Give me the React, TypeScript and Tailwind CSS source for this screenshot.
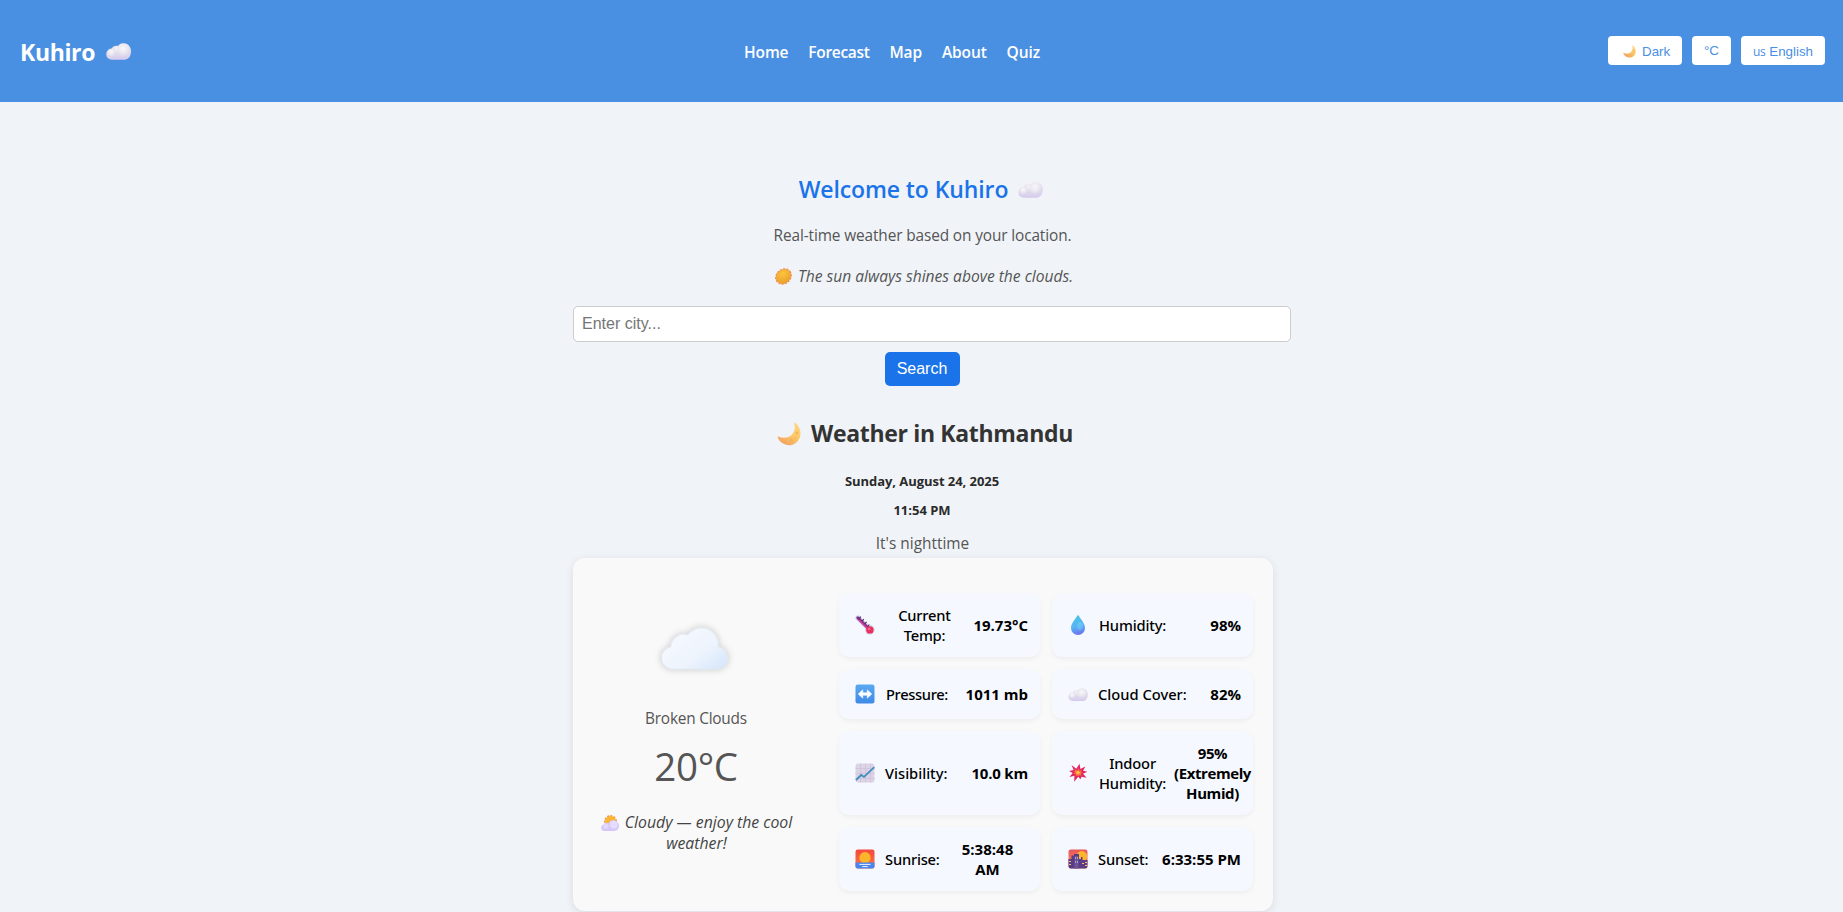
import React, { type ReactNode } from "react";

type IconProps = { className?: string };

function Cloud({ className }: IconProps) {
  return (
    <svg viewBox="0 0 26 17" className={className}>
      <defs>
        <linearGradient id="cloudBase" x1="0" y1="0" x2="0" y2="1">
          <stop offset="0" stopColor="#f3f1f6" />
          <stop offset="0.6" stopColor="#e4dff0" />
          <stop offset="1" stopColor="#d3c9ee" />
        </linearGradient>
        <radialGradient id="cloudPuff" cx="0.45" cy="0.35" r="0.65">
          <stop offset="0" stopColor="#fbfafc" />
          <stop offset="0.6" stopColor="#e8e5ee" />
          <stop offset="1" stopColor="#d6cee9" />
        </radialGradient>
      </defs>
      <path d="M6 17a5.6 5.6 0 0 1-.3-11.2C7 3 10 1.800 12.500 2.700 14 .8 16 0 18.200 0 22.500 0 26 3.500 26 8.500S23 17 19.500 17z" fill="url(#cloudBase)" />
      <circle cx="12" cy="7.300" r="4.500" fill="url(#cloudPuff)" opacity="0.8" />
      <circle cx="5.800" cy="10" r="4.600" fill="url(#cloudPuff)" opacity="0.9" />
      <circle cx="18.300" cy="7.600" r="7" fill="url(#cloudPuff)" opacity="0.9" />
    </svg>
  );
}

function Moon({ className }: IconProps) {
  return (
    <svg viewBox="0 0 24 24" className={className}>
      <defs>
        <linearGradient id="moonFill" x1="0.9" y1="0" x2="0.3" y2="1">
          <stop offset="0" stopColor="#fbd98c" />
          <stop offset="0.55" stopColor="#fdc665" />
          <stop offset="1" stopColor="#f0a262" />
        </linearGradient>
      </defs>
      <path d="M18.300.8C22.500 4 24.500 9.500 23 15c-2 6.500-8.500 9.500-14 7.800C5 21.700 1.800 18.900.7 15.600c-.3-1 .5-1.300 1.300-.9 5 2 10.500 1 13.500-2.800 2.400-3 2.700-6.700 1.800-10.200-.2-.9.300-1.400 1-.9z" fill="url(#moonFill)" />
      <circle cx="20" cy="11" r="1.400" fill="#e9a650" opacity="0.6" />
      <circle cx="14.500" cy="18" r="1.600" fill="#e9a650" opacity="0.5" />
      <circle cx="8.500" cy="19.500" r="1.100" fill="#e9a650" opacity="0.5" />
      <circle cx="18.500" cy="16" r="1" fill="#e9a650" opacity="0.5" />
    </svg>
  );
}

function Sun({ className }: IconProps) {
  return (
    <svg viewBox="0 0 18 18" className={className}>
      <defs>
        <radialGradient id="sunFill" cx="0.6" cy="0.3" r="0.7">
          <stop offset="0" stopColor="#fcc53d" />
          <stop offset="1" stopColor="#eaa02c" />
        </radialGradient>
      </defs>
      <g transform="rotate(-40 9 9)">
        <ellipse cx="9" cy="9" rx="8.600" ry="7.300" fill="none" stroke="#f08a45" strokeWidth="1.600" strokeDasharray="2.200 1.300" />
        <ellipse cx="9" cy="9" rx="8.300" ry="7.100" fill="url(#sunFill)" stroke="#ee9340" strokeWidth="0.500" />
      </g>
    </svg>
  );
}

function SunBehindCloud({ className }: IconProps) {
  return (
    <svg viewBox="0 0 18 16" className={className}>
      <circle cx="9.500" cy="6.500" r="5.600" fill="none" stroke="#f08a35" strokeWidth="1.600" strokeDasharray="2 1.200" />
      <circle cx="9.500" cy="6.500" r="5.400" fill="#fbb62f" />
      <path d="M3.300 16a3.300 3.300 0 0 1-.6-6.500c.8-1.900 3.300-2.400 4.800-1.200C8.800 5.800 10.700 4.800 13 5.200c3 .5 5 2.700 5 5.600 0 3-2 5.200-4.800 5.200z" fill="#d6c6fa" />
      <circle cx="12.800" cy="9.600" r="3.900" fill="#e6dcfd" />
      <circle cx="5" cy="11.300" r="2.600" fill="#e2d7fc" />
    </svg>
  );
}

function Thermometer({ className }: IconProps) {
  return (
    <svg viewBox="0 0 20 20" className={className}>
      <path d="M3 3l11.500 11.500" stroke="#cfd6ee" strokeWidth="5.200" strokeLinecap="round" />
      <circle cx="14.800" cy="14.800" r="4.800" fill="#cdd3ec" />
      <path d="M2.800 2.800l11 11" stroke="#8d2f86" strokeWidth="3" strokeLinecap="round" />
      <path d="M4.500 5.500l9 9" stroke="#d63a9c" strokeWidth="1.400" strokeLinecap="round" />
      <path d="M5.800 1.600L4 3.800M8.800 4.200L7 6.300M11.600 6.800L9.800 8.900M14.300 9.500l-1.600 2" stroke="#533064" strokeWidth="1.200" />
      <circle cx="14.900" cy="14.900" r="3.700" fill="#ee2f5c" />
      <circle cx="14.200" cy="14" r="1.300" fill="#f7698a" />
    </svg>
  );
}

function Droplet({ className }: IconProps) {
  return (
    <svg viewBox="0 0 20 20" className={className}>
      <defs>
        <linearGradient id="dropFill" x1="0.3" y1="0" x2="0.5" y2="1">
          <stop offset="0" stopColor="#4ec3e4" />
          <stop offset="0.55" stopColor="#55b6f4" />
          <stop offset="1" stopColor="#6d72f2" />
        </linearGradient>
      </defs>
      <path d="M9.400.5c.3-.5.9-.5 1.200 0C13 4.300 17 8.800 17 13a7 7 0 0 1-14 0C3 8.800 7 4.300 9.400.5z" fill="url(#dropFill)" />
      <ellipse cx="12" cy="11" rx="2.800" ry="4" fill="#7bd2fb" opacity="0.45" />
    </svg>
  );
}

function Arrows({ className }: IconProps) {
  return (
    <svg viewBox="0 0 20 20" className={className}>
      <defs>
        <linearGradient id="arrowTile" x1="0" y1="0" x2="0" y2="1">
          <stop offset="0" stopColor="#5aa9f2" />
          <stop offset="1" stopColor="#3f8ae6" />
        </linearGradient>
      </defs>
      <rect x="0.500" y="0.500" width="19" height="19" rx="2.200" fill="url(#arrowTile)" />
      <path d="M3.200 10l4.600-4.200v2.900h4.400V5.800l4.600 4.200-4.600 4.200v-2.900H7.800v2.900z" fill="#fff" stroke="#fff" strokeWidth="0.500" strokeLinejoin="round" />
    </svg>
  );
}

function Chart({ className }: IconProps) {
  return (
    <svg viewBox="0 0 20 20" className={className}>
      <rect x="0.500" y="0.500" width="19" height="19" rx="2.500" fill="#dcd3e6" />
      <path d="M5.500.5v19M10.500.5v19M15.500.5v19M.5 5.500h19M.5 10.500h19M.5 15.500h19" stroke="#cfc4da" strokeWidth="0.900" />
      <path d="M1 17l5.200-5 2.800 1.900L19.300 4.200" fill="none" stroke="#3f8fc0" strokeWidth="1.800" />
    </svg>
  );
}

function Burst({ className }: IconProps) {
  return (
    <svg viewBox="0 0 20 20" className={className}>
      <path d="M3.500 2l4.800 3.700L11.500.8l.9 5.200 5-2.500-2.300 4.200 4.200 1-4.200 2 3.400 4-5-1-1 2.600-2.300-2.600-4 5 .2-6L1.500 14l3.200-4L1 8l4.600-1z" fill="#e3245f" />
      <path d="M6.500 6l2.700 1.600 1.500-2.700.6 2.900 2.700-1.100-1.300 2.400 2.200.7-2.200 1 1.100 2-2.600-.6-1 1.500-1.100-1.600-1.600 1.700.3-2.700-2.300-.1 1.700-1.600-2.200-.9 2.100-.3z" fill="#f8743c" />
      <circle cx="10" cy="9.600" r="1.700" fill="#ffc54a" />
    </svg>
  );
}

function Sunrise({ className }: IconProps) {
  return (
    <svg viewBox="0 0 20 20" className={className}>
      <defs>
        <linearGradient id="riseSky" x1="0" y1="0" x2="0" y2="1">
          <stop offset="0" stopColor="#f4483f" />
          <stop offset="1" stopColor="#fb7a3d" />
        </linearGradient>
      </defs>
      <rect x="0.500" y="0.500" width="19" height="19" rx="2.200" fill="url(#riseSky)" />
      <circle cx="10" cy="8.700" r="5.600" fill="#fdb52c" />
      <path d="M.5 13.500h19v3.800a2.200 2.200 0 0 1-2.200 2.200H2.700a2.200 2.200 0 0 1-2.200-2.200z" fill="#4a86ee" />
      <path d="M4.800 15.400h10.400M7.600 17.600h4.800" stroke="#fff" strokeWidth="0.900" strokeLinecap="round" />
    </svg>
  );
}

function Sunset({ className }: IconProps) {
  return (
    <svg viewBox="0 0 20 20" className={className}>
      <defs>
        <linearGradient id="duskSky" x1="0" y1="0" x2="0" y2="1">
          <stop offset="0" stopColor="#e8565c" />
          <stop offset="1" stopColor="#f99a55" />
        </linearGradient>
      </defs>
      <rect x="0.500" y="0.500" width="19" height="19" rx="2.200" fill="url(#duskSky)" />
      <circle cx="13.800" cy="7.200" r="5.200" fill="#fcb52e" />
      <path d="M.5 10h3V6.500h2.500V5h5v5h2V8h1.500v3h5v6.300a2.200 2.200 0 0 1-2.200 2.200H2.700a2.200 2.200 0 0 1-2.200-2.200z" fill="#5a3b85" />
      <path d="M6.500 7h4v12.500h-4z" fill="#6f5597" />
      <path d="M7.500 8v2M9.500 8v2M7.500 12v2M9.500 12v2" stroke="#b9a6d2" strokeWidth="0.900" />
      <path d="M14 14.500h2M17 13.500h2M17 16.500h2.500M1 12.500h2M1 15.500h2" stroke="#f2c07a" strokeWidth="1.200" />
    </svg>
  );
}

function BigCloud() {
  return (
    <svg viewBox="0 0 90 66" className="h-[66px] w-[90px] shrink-0 overflow-visible">
      <defs>
        <linearGradient id="bigCloud" x1="0.300" y1="0.300" x2="1" y2="0.900">
          <stop offset="0" stopColor="#f3f7fe" />
          <stop offset="0.450" stopColor="#eef4fd" />
          <stop offset="1" stopColor="#d6e6fb" />
        </linearGradient>
      </defs>
      <path
        d="M22.500 54.500a11.600 11.600 0 0 1-2-23A13 13 0 0 1 37.500 19.500 17.200 17.200 0 0 1 68.500 31.500 11.600 11.600 0 0 1 67.500 54.500z"
        fill="url(#bigCloud)"
        stroke="#e3e7ec"
        strokeWidth="1.600"
        className="drop-shadow-[0_0_3px_rgba(0,0,0,0.17)]"
      />
    </svg>
  );
}

function Item({ icon, label, value }: { icon: ReactNode; label: ReactNode; value: ReactNode }) {
  return (
    <div className="flex items-center rounded-[10px] bg-[#f5f9ff] pr-3 pl-4 text-center leading-5 whitespace-nowrap text-black shadow-[0_2px_5px_rgba(0,0,0,0.05)]">
      <span className="mr-[11px] flex size-5 shrink-0 items-center justify-center">{icon}</span>
      <span className="font-['Noto_Sans',sans-serif] text-[14.7px] font-medium">{label}</span>
      <span className="ml-auto text-[15px] font-bold">{value}</span>
    </div>
  );
}

export default function App() {
  return (
    <div className="h-screen overflow-hidden bg-[#f0f4f8] font-['Open_Sans','Noto_Sans',sans-serif]">
      <header className="flex h-[102px] items-center justify-between bg-[#4a90e2] pr-[18px] pl-5 text-white">
        <div className="flex w-[156px] items-center pt-px">
          <span className="text-[23px] leading-8 font-bold tracking-[-0.35px]">Kuhiro</span>
          <Cloud className="ml-[11px] h-[17px] w-[25px]" />
        </div>
        <nav className="flex w-[296px] justify-between pt-px text-[15.5px] leading-6 font-semibold tracking-[-0.1px]">
          <a>Home</a>
          <a className="tracking-[-0.3px]">Forecast</a>
          <a>Map</a>
          <a>About</a>
          <a>Quiz</a>
        </nav>
        <div className="flex gap-2.5 pb-px font-['Liberation_Sans',Arial,sans-serif] text-[13.333px] text-[#4a90e2]">
          <button className="flex h-[29px] w-[74px] items-center rounded bg-white pt-0.5 pl-[15px]">
            <Moon className="mr-1.5 size-[13px]" />
            Dark
          </button>
          <button className="h-[29px] w-[39px] rounded bg-white">°C</button>
          <button className="flex h-[29px] w-[84px] items-center rounded bg-white pt-0.5 pl-3">
            <span className="mr-1 font-['Open_Sans',sans-serif] text-[12px] leading-4 tracking-[-0.4px]">us</span>
            English
          </button>
        </div>
      </header>

      <div className="pl-[3px]">
        <main className="mx-auto flex w-[700px] flex-col items-center pt-[71px] text-center text-[#555]">
          <h1 className="flex h-8 items-center pr-1 text-[23px] leading-8 font-semibold tracking-[-0.1px] text-[#1a73e8]">
            Welcome to Kuhiro
            <Cloud className="ml-2.5 h-[17px] w-[25px]" />
          </h1>
          <p className="mt-[19px] pr-px text-[15.4px] leading-6 tracking-[-0.12px]">Real-time weather based on your location.</p>
          <p className="mt-4 flex items-center pl-0.5 text-[15.6px] leading-6 italic">
            <Sun className="mr-1.5 size-[17px]" />
            The sun always shines above the clouds.
          </p>
          <input
            placeholder="Enter city..."
            className="mt-[18px] h-9 w-[718px] shrink-0 self-start rounded-[5px] border border-[#ccc] bg-white px-2 font-['Liberation_Sans',Arial,sans-serif] text-base placeholder:text-[#757575]"
          />
          <button className="mt-2.5 mr-0.5 h-[34px] w-[75px] rounded-[5px] bg-[#1a73e8] font-['Liberation_Sans',Arial,sans-serif] text-base text-white">
            Search
          </button>
          <h2 className="mt-[31px] flex items-center pl-1 text-[23px] leading-8 font-bold tracking-[-0.33px] text-[#333]">
            <Moon className="mt-0.5 mr-2.5 size-6" />
            Weather in Kathmandu
          </h2>
          <p className="mt-[23px] pr-0.5 text-[13px] leading-[18px] font-bold tracking-[-0.05px] text-[#2a2a2a]">Sunday, August 24, 2025</p>
          <p className="mt-[11px] pr-0.5 text-[13px] leading-[18px] font-bold text-[#2a2a2a]">11:54 PM</p>
          <p className="mt-[13px] pr-px text-[15.4px] leading-6">It's nighttime</p>

          <section className="mt-0.5 flex h-[353px] w-[700px] rounded-xl bg-[#f9f9f9] pt-[35px] pr-5 pb-5 pl-5 shadow-[0_2px_8px_rgba(0,0,0,0.1)]">
            <div className="flex w-[206px] flex-col items-center pt-[22px]">
              <div className="pr-[3px]">
                <BigCloud />
              </div>
              <p className="mt-[26px] text-[15.4px] leading-6 tracking-[-0.22px]">Broken Clouds</p>
              <p className="mt-[9px] text-[38.5px] leading-[52px] tracking-[-0.3px]">20°C</p>
              <p className="mt-5 pl-px text-[15.8px] leading-[21px] text-[#444] italic">
                <span className="flex items-center whitespace-nowrap">
                  <SunBehindCloud className="mr-1.5 h-4 w-[18px]" />
                  Cloudy — enjoy the cool
                </span>
                weather!
              </p>
            </div>
            <div className="ml-10 grid w-[414px] grid-cols-2 grid-rows-[64px_50px_84px_64px] gap-3">
              <Item
                icon={<Thermometer className="size-5" />}
                label={<span className="block w-[77px] tracking-[-0.2px]">Current<br />Temp:</span>}
                value="19.73°C"
              />
              <Item icon={<Droplet className="size-5" />} label={<span className="tracking-[-0.15px]">Humidity:</span>} value="98%" />
              <Item icon={<Arrows className="size-5" />} label={<span className="tracking-[-0.35px]">Pressure:</span>} value="1011 mb" />
              <Item icon={<Cloud className="h-[13px] w-5" />} label={<span className="-ml-px">Cloud Cover:</span>} value="82%" />
              <Item icon={<Chart className="size-5" />} label={<span className="-ml-px">Visibility:</span>} value={<span className="tracking-[-0.2px]">10.0 km</span>} />
              <Item
                icon={<Burst className="size-5" />}
                label={<span className="block tracking-[-0.15px]">Indoor<br />Humidity:</span>}
                value={<span className="-mr-2.5 block tracking-[-0.4px]">95%<br />(Extremely<br />Humid)</span>}
              />
              <Item
                icon={<Sunrise className="size-5" />}
                label={<span className="-ml-px tracking-[-0.2px]">Sunrise:</span>}
                value={<span className="block w-[81px]">5:38:48<br />AM</span>}
              />
              <Item icon={<Sunset className="size-5" />} label={<span className="-ml-px tracking-[-0.2px]">Sunset:</span>} value="6:33:55 PM" />
            </div>
          </section>
        </main>
      </div>
    </div>
  );
}
